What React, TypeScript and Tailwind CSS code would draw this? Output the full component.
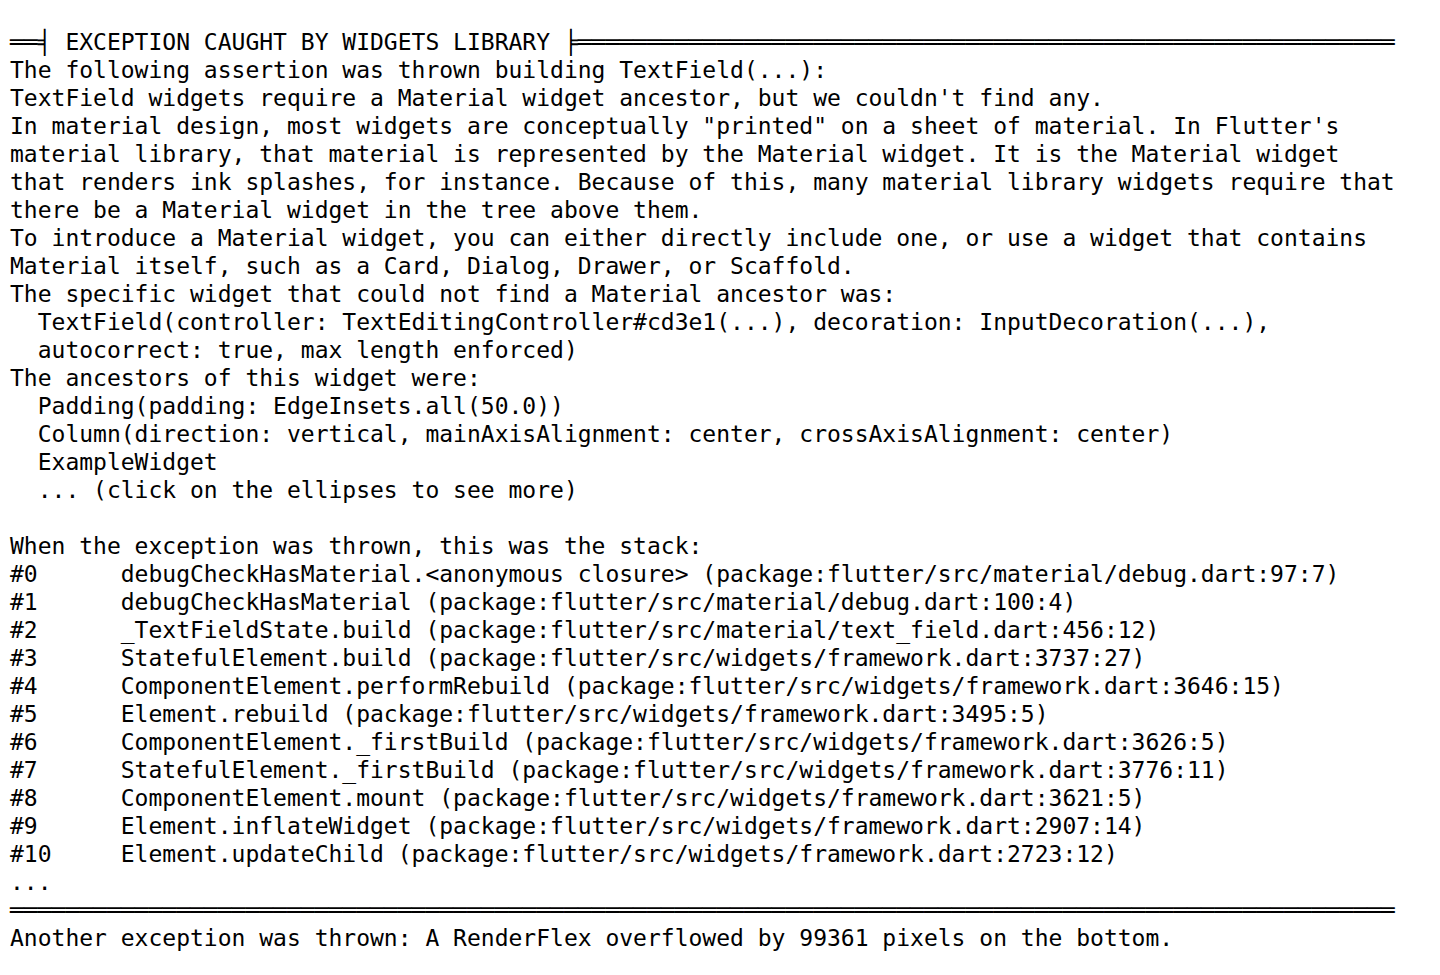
import React from "react";

const header = "══╡ EXCEPTION CAUGHT BY WIDGETS LIBRARY ╞" + "═".repeat(59);
const footer = "═".repeat(100);

const lines: string[] = [
  header,
  "The following assertion was thrown building TextField(...):",
  "TextField widgets require a Material widget ancestor, but we couldn't find any.",
  "In material design, most widgets are conceptually \"printed\" on a sheet of material. In Flutter's",
  "material library, that material is represented by the Material widget. It is the Material widget",
  "that renders ink splashes, for instance. Because of this, many material library widgets require that",
  "there be a Material widget in the tree above them.",
  "To introduce a Material widget, you can either directly include one, or use a widget that contains",
  "Material itself, such as a Card, Dialog, Drawer, or Scaffold.",
  "The specific widget that could not find a Material ancestor was:",
  "  TextField(controller: TextEditingController#cd3e1(...), decoration: InputDecoration(...),",
  "  autocorrect: true, max length enforced)",
  "The ancestors of this widget were:",
  "  Padding(padding: EdgeInsets.all(50.0))",
  "  Column(direction: vertical, mainAxisAlignment: center, crossAxisAlignment: center)",
  "  ExampleWidget",
  "  ... (click on the ellipses to see more)",
  "",
  "When the exception was thrown, this was the stack:",
  "#0      debugCheckHasMaterial.<anonymous closure> (package:flutter/src/material/debug.dart:97:7)",
  "#1      debugCheckHasMaterial (package:flutter/src/material/debug.dart:100:4)",
  "#2      _TextFieldState.build (package:flutter/src/material/text_field.dart:456:12)",
  "#3      StatefulElement.build (package:flutter/src/widgets/framework.dart:3737:27)",
  "#4      ComponentElement.performRebuild (package:flutter/src/widgets/framework.dart:3646:15)",
  "#5      Element.rebuild (package:flutter/src/widgets/framework.dart:3495:5)",
  "#6      ComponentElement._firstBuild (package:flutter/src/widgets/framework.dart:3626:5)",
  "#7      StatefulElement._firstBuild (package:flutter/src/widgets/framework.dart:3776:11)",
  "#8      ComponentElement.mount (package:flutter/src/widgets/framework.dart:3621:5)",
  "#9      Element.inflateWidget (package:flutter/src/widgets/framework.dart:2907:14)",
  "#10     Element.updateChild (package:flutter/src/widgets/framework.dart:2723:12)",
  "...",
  footer,
  "Another exception was thrown: A RenderFlex overflowed by 99361 pixels on the bottom.",
];

export default function App() {
  return (
    <div className="w-[1440px] h-[975px] bg-white overflow-hidden pl-[10px] pt-[28px]">
      <div
        className="whitespace-pre text-black text-[23px] leading-[28px]"
        style={{ fontFamily: '"DejaVu Sans Mono", "Liberation Mono", monospace' }}
      >
        {lines.map((l, i) => (
          <div key={i} className="h-[28px]">
            {l}
          </div>
        ))}
      </div>
    </div>
  );
}
